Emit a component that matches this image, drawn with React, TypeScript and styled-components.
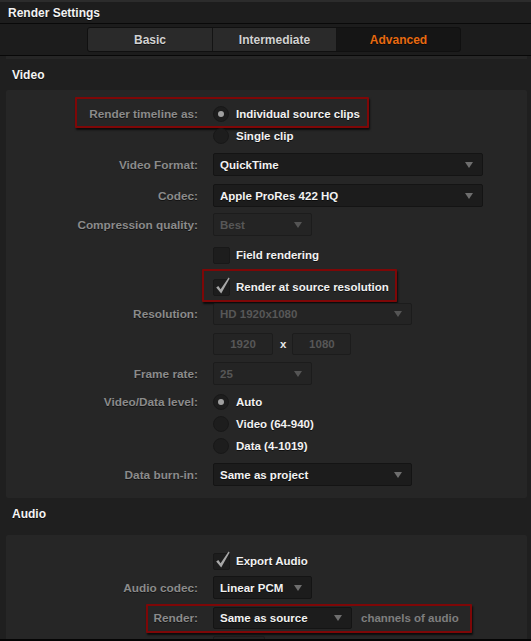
import React from "react";
import styled, { createGlobalStyle } from "styled-components";

const GlobalStyle = createGlobalStyle`
  html, body { margin: 0; padding: 0; background: #1e1e1e; }
  * { box-sizing: border-box; }
  body { font-family: "Liberation Sans", Arial, sans-serif; font-weight: bold; font-size: 12px; }
`;

const Window = styled.div`
  width: 531px;
  height: 641px;
  overflow: hidden;
  background: #1f1f1f;
  border-bottom: 2px solid #050505;
  display: flex;
  flex-direction: column;
`;

const TitleBar = styled.div`
  height: 24px;
  flex: none;
  display: flex;
  align-items: center;
  padding-left: 8px;
  color: #f2f2f2;
  font-size: 12px;
  background: #1d1d1d;
  border-top: 2px solid #2c2c2c;
  border-bottom: 1px solid #090909;
  text-shadow: 0 1px 0 rgba(0, 0, 0, 0.7);
`;

const TabBar = styled.div`
  height: 32px;
  flex: none;
  padding: 3px 0 0 87px;
  background: #1c1c1c;
  border-bottom: 1px solid #080808;
`;

const TabGroup = styled.div`
  display: inline-flex;
  height: 25px;
  border: 1px solid #101010;
  border-radius: 3px;
  overflow: hidden;
  background: #101010;
`;

const Tab = styled.div<{ $active?: boolean }>`
  width: 124px;
  display: flex;
  align-items: center;
  justify-content: center;
  font-size: 12px;
  color: ${(p) => (p.$active ? "#e86a10" : "#d2d2d2")};
  background: ${(p) => (p.$active ? "#151515" : "#2a2a2a")};
  & + & { border-left: 1px solid #141414; }
  text-shadow: 0 1px 0 rgba(0, 0, 0, 0.6);
`;

const Content = styled.div`
  flex: 1;
  padding: 0 4px 0 6px;
  overflow: hidden;
`;

const Strip = styled.div`
  height: 3px;
  background: #262626;
`;

const SectionHeader = styled.div<{ $h: number; $pb?: number }>`
  height: ${(p) => p.$h}px;
  display: flex;
  align-items: center;
  padding: 0 0 ${(p) => p.$pb ?? 0}px 6px;
  color: #f4f4f4;
  font-size: 12px;
  text-shadow: 0 1px 0 rgba(0, 0, 0, 0.7);
`;

const Panel = styled.div<{ $pt: number; $pb: number }>`
  background: #262626;
  border-radius: 2px;
  padding: ${(p) => p.$pt}px 0 ${(p) => p.$pb}px;
`;

const Row = styled.div<{ $h: number; $mt?: number }>`
  position: relative;
  display: grid;
  grid-template-columns: 192px 1fr;
  column-gap: 15px;
  align-items: center;
  height: ${(p) => p.$h}px;
  margin-top: ${(p) => p.$mt ?? 0}px;
`;

const Label = styled.div`
  text-align: right;
  color: #8b8b8b;
  font-size: 11.8px;
  white-space: nowrap;
  text-shadow: 0 1px 0 rgba(0, 0, 0, 0.5);
`;

const Controls = styled.div`
  display: flex;
  align-items: center;
  height: 100%;
`;

const Highlight = styled.div<{ $left: number; $width: number; $top: number; $bottom: number }>`
  position: absolute;
  left: ${(p) => p.$left}px;
  width: ${(p) => p.$width}px;
  top: ${(p) => p.$top}px;
  bottom: ${(p) => p.$bottom}px;
  border: 2px solid #7e0707;
  border-radius: 1px;
  box-shadow: 1px 2px 2px rgba(0, 0, 0, 0.7);
  pointer-events: none;
`;

const OptionText = styled.span`
  color: #f2f2f2;
  font-size: 11.5px;
  white-space: nowrap;
  text-shadow: 0 1px 0 rgba(0, 0, 0, 0.6);
`;

const Radio = styled.span<{ $on?: boolean }>`
  width: 16px;
  height: 16px;
  flex: none;
  border-radius: 50%;
  background: #1d1d1d;
  border: 1px solid #181818;
  margin-right: 7px;
  display: flex;
  align-items: center;
  justify-content: center;
  &::after {
    content: "";
    width: 6px;
    height: 6px;
    border-radius: 50%;
    background: #a0a0a0;
    display: ${(p) => (p.$on ? "block" : "none")};
  }
`;

const Box = styled.span`
  position: relative;
  width: 17px;
  height: 17px;
  flex: none;
  border-radius: 2px;
  background: #1d1d1d;
  border: 1px solid #181818;
  margin-right: 6px;
`;

const CheckMark = styled.svg`
  position: absolute;
  left: 0;
  top: -2px;
  overflow: visible;
`;

const Select = styled.div<{ $w: number; $disabled?: boolean }>`
  width: ${(p) => p.$w}px;
  height: 100%;
  display: flex;
  align-items: center;
  justify-content: space-between;
  padding: 0 9px 0 6px;
  border-radius: 2px;
  background: ${(p) => (p.$disabled ? "#242424" : "#1c1c1c")};
  border: 1px solid ${(p) => (p.$disabled ? "#1c1c1c" : "#141414")};
  color: ${(p) => (p.$disabled ? "#575757" : "#f2f2f2")};
  font-size: 11.5px;
  white-space: nowrap;
  text-shadow: ${(p) => (p.$disabled ? "none" : "0 1px 0 rgba(0,0,0,0.6)")};
  &::after {
    content: "";
    width: 0;
    height: 0;
    border-left: 4px solid transparent;
    border-right: 4px solid transparent;
    border-top: 6px solid ${(p) => (p.$disabled ? "#555" : "#6e6e6e")};
  }
`;

const NumberBox = styled.div<{ $w: number }>`
  width: ${(p) => p.$w}px;
  height: 100%;
  display: flex;
  align-items: center;
  justify-content: center;
  border-radius: 2px;
  background: #242424;
  border: 1px solid #1c1c1c;
  color: #575757;
  font-size: 11.5px;
`;

const Times = styled.span`
  color: #e8e8e8;
  font-size: 11.5px;
  margin: 0 6px 0 7px;
`;

const Trail = styled.span`
  margin-left: 9px;
  color: #7e7e7e;
  font-size: 11.5px;
  white-space: nowrap;
`;

const Check = () => (
  <CheckMark width="17" height="17" viewBox="0 0 17 17">
    <path d="M2.2 9.6 L4.3 7.9 L6.6 11.2 L14.6 -0.6 L15.6 0.4 L7.2 15.4 Z" fill="#a7a7a7" />
  </CheckMark>
);

const RadioOption = ({ on, children }: { on?: boolean; children: React.ReactNode }) => (
  <Controls>
    <Radio $on={on} />
    <OptionText>{children}</OptionText>
  </Controls>
);

const CheckOption = ({ checked, children }: { checked?: boolean; children: React.ReactNode }) => (
  <Controls>
    <Box>{checked && <Check />}</Box>
    <OptionText>{children}</OptionText>
  </Controls>
);

export default function App() {
  return (
    <>
      <GlobalStyle />
      <Window>
        <TitleBar>Render Settings</TitleBar>
        <TabBar>
          <TabGroup>
            <Tab>Basic</Tab>
            <Tab>Intermediate</Tab>
            <Tab $active>Advanced</Tab>
          </TabGroup>
        </TabBar>
        <Content>
          <Strip />
          <SectionHeader $h={31}>Video</SectionHeader>
          <Panel $pt={13} $pb={12}>
            <Row $h={22}>
              <Highlight $left={69} $width={294} $top={-6} $bottom={-3} />
              <Label>Render timeline as:</Label>
              <RadioOption on>Individual source clips</RadioOption>
            </Row>
            <Row $h={22}>
              <span />
              <RadioOption>Single clip</RadioOption>
            </Row>
            <Row $h={23} $mt={6}>
              <Label>Video Format:</Label>
              <Controls>
                <Select $w={270}>QuickTime</Select>
              </Controls>
            </Row>
            <Row $h={23} $mt={8}>
              <Label>Codec:</Label>
              <Controls>
                <Select $w={270}>Apple ProRes 422 HQ</Select>
              </Controls>
            </Row>
            <Row $h={23} $mt={6}>
              <Label>Compression quality:</Label>
              <Controls>
                <Select $w={99} $disabled>Best</Select>
              </Controls>
            </Row>
            <Row $h={22} $mt={8}>
              <span />
              <CheckOption>Field rendering</CheckOption>
            </Row>
            <Row $h={22} $mt={10}>
              <Highlight $left={196} $width={195} $top={-7} $bottom={-4} />
              <span />
              <CheckOption checked>Render at source resolution</CheckOption>
            </Row>
            <Row $h={22} $mt={5}>
              <Label>Resolution:</Label>
              <Controls>
                <Select $w={199} $disabled>HD 1920x1080</Select>
              </Controls>
            </Row>
            <Row $h={22} $mt={8}>
              <span />
              <Controls>
                <NumberBox $w={60}>1920</NumberBox>
                <Times>x</Times>
                <NumberBox $w={59}>1080</NumberBox>
              </Controls>
            </Row>
            <Row $h={23} $mt={7}>
              <Label>Frame rate:</Label>
              <Controls>
                <Select $w={99} $disabled>25</Select>
              </Controls>
            </Row>
            <Row $h={22} $mt={6}>
              <Label>Video/Data level:</Label>
              <RadioOption on>Auto</RadioOption>
            </Row>
            <Row $h={22}>
              <span />
              <RadioOption>Video (64-940)</RadioOption>
            </Row>
            <Row $h={22}>
              <span />
              <RadioOption>Data (4-1019)</RadioOption>
            </Row>
            <Row $h={23} $mt={6}>
              <Label>Data burn-in:</Label>
              <Controls>
                <Select $w={199}>Same as project</Select>
              </Controls>
            </Row>
          </Panel>
          <SectionHeader $h={37} $pb={5}>Audio</SectionHeader>
          <Panel $pt={15} $pb={12}>
            <Row $h={22}>
              <span />
              <CheckOption checked>Export Audio</CheckOption>
            </Row>
            <Row $h={23} $mt={4}>
              <Label>Audio codec:</Label>
              <Controls>
                <Select $w={99}>Linear PCM</Select>
              </Controls>
            </Row>
            <Row $h={22} $mt={8}>
              <Highlight $left={140} $width={326} $top={-3} $bottom={-4} />
              <Label>Render:</Label>
              <Controls>
                <Select $w={139}>Same as source</Select>
                <Trail>channels of audio</Trail>
              </Controls>
            </Row>
            <Row $h={22} $mt={7}>
              <span />
              <Controls>
                <NumberBox $w={52} />
              </Controls>
            </Row>
          </Panel>
        </Content>
      </Window>
    </>
  );
}
